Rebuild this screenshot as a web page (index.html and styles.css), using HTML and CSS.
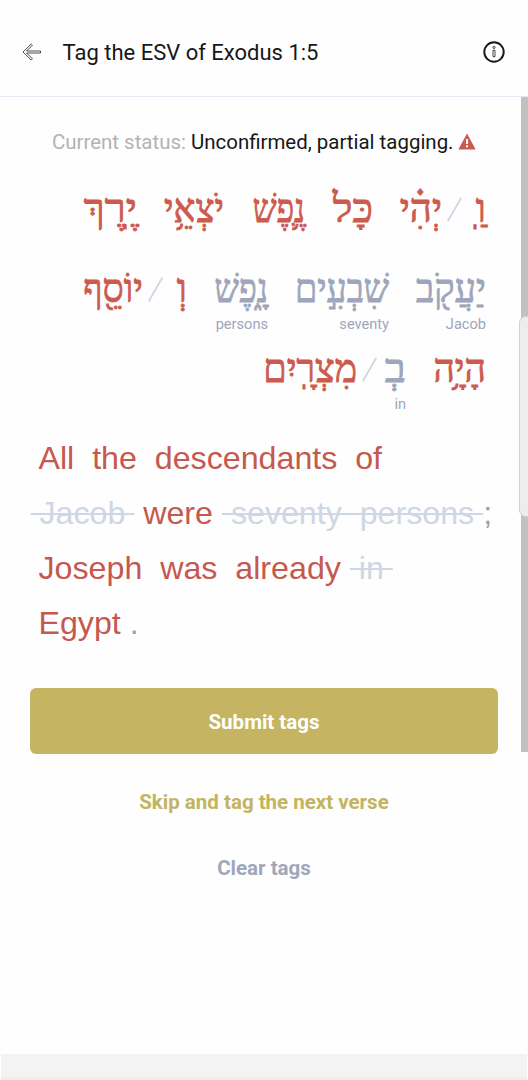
FILE: index.html
```html
<!DOCTYPE html>
<html lang="en">
<head>
<meta charset="utf-8">
<title>Tag the ESV of Exodus 1:5</title>
<link rel="stylesheet" href="styles.css">
</head>
<body>
<header class="bar">
  <svg class="back" width="20" height="18" viewBox="0 0 20 18"><path d="M9.2 1 1 9l8.2 8 1.2-1.2L4.6 10H18.5V8H4.6l5.8-5.8z"/></svg>
  <h1>Tag the ESV of Exodus 1:5</h1>
  <svg class="info" width="24" height="24" viewBox="0 0 24 24"><circle cx="12" cy="12" r="9.7"/><path d="M11 10.3h2v6.4h-2z"/><circle class="dot" cx="12" cy="7.4" r="1.1"/></svg>
</header>
<main class="content">
  <p class="status"><span class="label">Current status: </span><span>Unconfirmed, partial tagging.</span><svg width="18" height="17" viewBox="0 0 18 17"><path class="tri" d="M9 .5 17.7 16.5H.3z"/><path class="mark" d="M8 6h2v5H8zM8 12.3h2v2H8z"/></svg></p>
  <section class="hebrew" lang="he" dir="rtl">
    <div class="line">
      <div class="word"><span class="part and">וַֽ</span><svg class="slash" viewBox="0 0 15 25"><path d="M.7 24.3 14.3.7"/></svg><span class="part was">יְהִ֗י</span></div>
      <div class="word"><span class="part all">כָּל</span></div>
      <div class="word"><span class="part soul">נֶ֛פֶשׁ</span></div>
      <div class="word"><span class="part issued">יֹצְאֵ֥י</span></div>
      <div class="word"><span class="part loin">יֶֽרֶךְ</span></div>
    </div>
    <div class="line">
      <div class="word tagged"><span class="part jacob">יַעֲקֹ֖ב</span><small>Jacob</small></div>
      <div class="word tagged"><span class="part seventy">שִׁבְעִ֣ים</span><small>seventy</small></div>
      <div class="word tagged"><span class="part persons">נָ֑פֶשׁ</span><small>persons</small></div>
      <div class="word"><span class="part and">וְ</span><svg class="slash" viewBox="0 0 15 25"><path d="M.7 24.3 14.3.7"/></svg><span class="part joseph">יוֹסֵ֖ף</span></div>
    </div>
    <div class="line">
      <div class="word"><span class="part being">הָיָ֥ה</span></div>
      <div class="word"><div class="word tagged"><span class="part in">בְ</span><small>in</small></div><svg class="slash near" viewBox="0 0 15 25"><path d="M.7 24.3 14.3.7"/></svg><span class="part egypt">מִצְרָֽיִם</span></div>
    </div>
  </section>
  <section class="verse">
    <div>All&nbsp; the&nbsp; descendants&nbsp; of</div>
    <div class="struck"><s>&nbsp;Jacob&nbsp;</s><b> were </b><s>&nbsp;seventy&nbsp; persons&nbsp;</s><em>;</em></div>
    <div>Joseph&nbsp; was&nbsp; already <s>&nbsp;in&nbsp;</s></div>
    <div>Egypt <em>.</em></div>
  </section>
  <div class="actions">
    <button class="submit">Submit tags</button>
    <button class="skip">Skip and tag the next verse</button>
    <button class="clear">Clear tags</button>
  </div>
  <div class="track"></div>
  <div class="panel"></div>
</main>
<footer class="nav"></footer>
</body>
</html>
```
FILE: styles.css
```css
* { box-sizing: border-box; }
body { margin: 0; height: 1080px; overflow: hidden; display: flex; flex-direction: column; background: #fefefe; font-family: Roboto, sans-serif; color: #171717; }
.bar { height: 97px; flex: none; display: flex; align-items: center; padding: 8px 22px 0 22px; border-bottom: 1px solid #e7e8f3; }
.back { fill: #fff; stroke: #222; stroke-width: .8; }
h1 { margin: 0 auto 0 20.5px; font-size: 22px; font-weight: 400; white-space: nowrap; }
.info { fill: #fff; stroke: #191919; stroke-width: 2; }
.info path, .info .dot { stroke-width: .8; }
.content { flex: 1; min-height: 0; position: relative; }
.status { margin: 0; padding: 31px 0 0 52px; height: 60px; display: flex; font-size: 20.45px; line-height: 28px; white-space: pre; }
.label { color: #b3b3b3; }
.status svg { margin: 5px 0 0 4px; }
.tri { fill: #cd5a50; }
.mark { fill: #fff; }

/* Hebrew source text */
.hebrew { padding: 27px 42px 0 0; height: 267px; font-family: "Liberation Serif", serif; font-size: 40px; color: #cd5a4e; }
.line { display: flex; gap: 28px; height: 80px; line-height: 50px; }
.word { position: relative; display: flex; height: 50px; }
.part { flex: none; white-space: nowrap; transform-origin: 100% 0; -webkit-text-stroke: .9px currentColor; }
.and { width: 10px; }
.was { width: 41px; transform: scaleX(.96); }
.all { width: 40px; transform: scaleX(1.05); }
.soul { width: 53px; transform: scaleX(.84); }
.issued { width: 59px; transform: scaleX(.91); }
.loin { width: 54px; transform: scaleX(1.07); }
.jacob { width: 69px; transform: scaleX(.95); }
.seventy { width: 93px; transform: scaleX(.89); }
.persons { width: 53px; transform: scaleX(.86); }
.joseph { width: 59px; transform: scaleX(.93); }
.being { width: 52px; transform: scaleX(.93); }
.in { width: 21px; transform: scaleX(1.1); }
.egypt { width: 94px; transform: scaleX(.94); }
.tagged { color: #9da6bb; }
small { position: absolute; right: 0; top: 50px; direction: ltr; font: 14.6px/20px Roboto, sans-serif; }
.slash { flex: none; width: 15px; height: 25px; margin: 13px 14px 0 5px; fill: none; stroke: #d0d5e2; stroke-width: 1.8; }
.near { margin-right: 8px; }

/* English verse */
.verse { padding: 7px 0 0 38.5px; height: 226px; font: 32.2px/55px "Liberation Sans", sans-serif; color: #c5584f; }
.verse div { white-space: pre; }
.verse s { color: #cfd6e4; text-decoration-thickness: 2px; }
.verse .struck { margin-left: -8px; }
.verse b { font-weight: 400; }
.verse em { font-style: normal; color: #9ba1b3; }

.actions { display: flex; flex-direction: column; padding: 38px 30px 0; }
button { height: 66px; padding: 0; border: 0; border-radius: 6px; background: none; font: 700 20.5px Roboto, sans-serif; }
.submit { padding-top: 2px; background: #c5b562; color: #fff; }
.skip { color: #c3b461; margin-top: 15px; }
.clear { color: #9fa7bb; }
.track { position: absolute; right: 0; top: 0; width: 7px; height: 655px; background: #c1c1c1; }
.panel { position: absolute; right: -8px; top: 219px; width: 17px; height: 201px; border: 1px solid #d0d1d1; border-radius: 7px; background: #eceeed; }
.nav { height: 26px; flex: none; margin: 0 1px; background: #f3f3f3; border-bottom: 3px solid #eee; }
```
